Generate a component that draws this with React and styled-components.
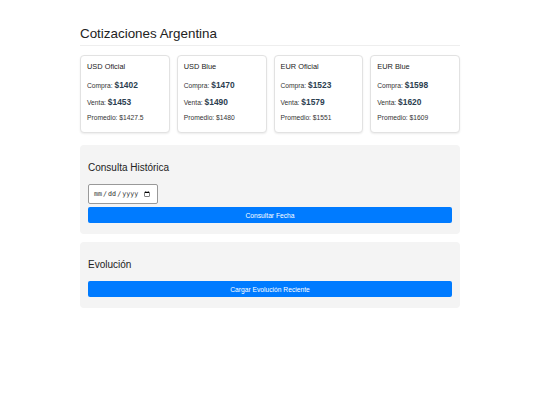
import React, { useState } from "react";
import styled, { createGlobalStyle } from "styled-components";

const GlobalStyle = createGlobalStyle`
    body {
        margin: 0;
        background: #fff;
        font-family: "Liberation Sans", Arial, sans-serif;
        color: #333;
    }
`;

const Container = styled.div`
    width: 380px;
    margin: 0 auto;
    padding-top: 25px;
`;

const Title = styled.h1`
    margin: 0;
    font-size: 13.4px;
    font-weight: normal;
    line-height: 18px;
    color: #222;
    padding-bottom: 2px;
    border-bottom: 1px solid #eee;
`;

const Cards = styled.div`
    display: grid;
    grid-template-columns: repeat(4, 1fr);
    gap: 7px;
    margin-top: 9px;
`;

const Card = styled.div`
    background: #fff;
    border: 1px solid #e2e2e2;
    border-radius: 4px;
    box-shadow: 0 1px 2px rgba(0, 0, 0, 0.08);
    padding: 6px 6px 5px;
`;

const CardTitle = styled.div`
    font-size: 7.4px;
    line-height: 10px;
    color: #222;
    margin-bottom: 7px;
`;

const Row = styled.div`
    font-size: 6.7px;
    line-height: ${(p) => (p.$small ? "10px" : "12px")};
    color: #333;
    margin-bottom: 4px;
`;

const Value = styled.strong`
    font-size: 8.4px;
    color: #2c3e50;
`;

const Section = styled.section`
    background: #f4f4f4;
    border-radius: 4px;
    padding: 8px 8px 11px;
    margin-top: ${(p) => p.$top}px;
`;

const SectionTitle = styled.h3`
    margin: 8px 0 10px;
    font-size: 10px;
    font-weight: normal;
    line-height: 13px;
    color: #222;
`;

const DateInput = styled.input`
    display: block;
    box-sizing: border-box;
    width: 70px;
    height: 20px;
    font-size: 6.7px;
    font-family: "DejaVu Sans Mono", monospace;
    padding: 0 4px;
    border: 1px solid #999;
    border-radius: 2px;
    background: #fff;
    color: #333;
`;

const Button = styled.button`
    display: block;
    width: 100%;
    height: 16px;
    margin-top: ${(p) => p.$top || 0}px;
    border: none;
    border-radius: 2px;
    background: #007bff;
    color: #fff;
    font-family: "Liberation Sans", Arial, sans-serif;
    font-size: 6.7px;
    cursor: pointer;
`;

const rates = [
    { name: "USD Oficial", compra: 1402, venta: 1453 },
    { name: "USD Blue", compra: 1470, venta: 1490 },
    { name: "EUR Oficial", compra: 1523, venta: 1579 },
    { name: "EUR Blue", compra: 1598, venta: 1620 },
];

export default function App() {
    const [fecha, setFecha] = useState("");

    return (
        <>
            <GlobalStyle />
            <Container>
                <Title>Cotizaciones Argentina</Title>
                <Cards>
                    {rates.map((r) => (
                        <Card key={r.name}>
                            <CardTitle>{r.name}</CardTitle>
                            <Row>Compra: <Value>${r.compra}</Value></Row>
                            <Row>Venta: <Value>${r.venta}</Value></Row>
                            <Row $small>Promedio: ${(r.compra + r.venta) / 2}</Row>
                        </Card>
                    ))}
                </Cards>

                <Section $top={12}>
                    <SectionTitle>Consulta Histórica</SectionTitle>
                    <DateInput
                        type="date"
                        value={fecha}
                        onChange={(e) => setFecha(e.target.value)}
                    />
                    <Button $top={3}>Consultar Fecha</Button>
                </Section>

                <Section $top={8}>
                    <SectionTitle>Evolución</SectionTitle>
                    <Button>Cargar Evolución Reciente</Button>
                </Section>
            </Container>
        </>
    );
}
